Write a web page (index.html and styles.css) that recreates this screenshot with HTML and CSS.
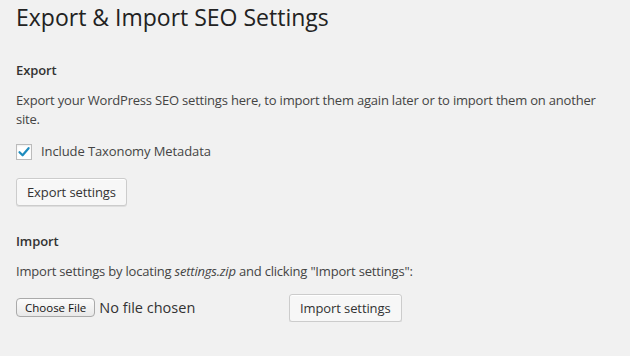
FILE: index.html
```html
<!DOCTYPE html>
<html>
<head>
<meta charset="utf-8">
<link rel="stylesheet" href="styles.css">
</head>
<body>
<div class="wrap">
  <h1 class="title">Export &amp; Import SEO Settings</h1>
  <h3 class="section-title">Export</h3>
  <p class="desc">Export your WordPress SEO settings here, to import them again later or to import them on another site.</p>
  <label class="check-row">
    <span class="checkbox"><svg width="16" height="16" viewBox="0 0 16 16"><path d="M3.5 8.2 L6.6 11.3 L12.6 4.2" fill="none" stroke="#1e8cbe" stroke-width="2.2" stroke-linecap="round" stroke-linejoin="round"/></svg></span>
    <span class="check-label">Include Taxonomy Metadata</span>
  </label>
  <div class="btn-row"><button class="btn">Export settings</button></div>
  <h3 class="section-title import-title">Import</h3>
  <p class="desc">Import settings by locating <em>settings.zip</em> and clicking "Import settings":</p>
  <div class="file-row">
    <div class="file-pick"><span class="file-btn">Choose File</span><span class="file-text">No file chosen</span></div>
    <button class="btn">Import settings</button>
  </div>
</div>
</body>
</html>
```
FILE: styles.css
```css
html, body { margin: 0; padding: 0; background: #f1f1f1; }
body { font-family: "Open Sans", sans-serif; color: #444; font-size: 13px; }
.wrap { padding: 0 16px; }
.title { margin: 0; padding: 3px 0 0; font-size: 23px; font-weight: 400; line-height: 29px; color: #222; }
.section-title { margin: 29px 0 0; font-size: 13px; font-weight: 600; line-height: 18px; color: #333; letter-spacing: -0.1px; }
.desc { margin: 12px 0 0; font-size: 13px; line-height: 19px; color: #444; letter-spacing: -0.2px; }
.check-row { display: flex; align-items: center; gap: 9px; margin-top: 13px; }
.checkbox { width: 16px; height: 16px; box-sizing: border-box; border: 1px solid #bbb; background: #fff; box-shadow: inset 0 1px 2px rgba(0,0,0,0.07); display: flex; }
.checkbox svg { margin: -1px; }
.check-label { font-size: 13px; color: #444; letter-spacing: -0.1px; line-height: 19px; }
.btn-row { margin-top: 17px; }
.btn { font-family: "Open Sans", sans-serif; font-size: 13px; color: #333; background: #f7f7f7; border: 1px solid #ccc; border-radius: 3px; box-shadow: inset 0 1px 0 #fff, 0 1px 0 rgba(0,0,0,0.08); height: 28px; padding: 0 10px 1px; line-height: 26px; margin: 0; letter-spacing: -0.1px; }
.import-title { margin-top: 26px; }
.file-row { display: flex; align-items: flex-start; margin-top: 13px; }
.file-pick { display: flex; align-items: center; width: 273px; margin-top: 4px; }
.file-btn { font-family: "Open Sans", sans-serif; font-size: 11.5px; color: #111; background: linear-gradient(#fcfcfc, #e8e8e8); border: 1px solid #aaa; border-radius: 4px; height: 19px; box-sizing: border-box; padding: 0 8px; line-height: 17px; }
.file-text { margin-left: 4px; font-size: 14.5px; color: #333; }
```
